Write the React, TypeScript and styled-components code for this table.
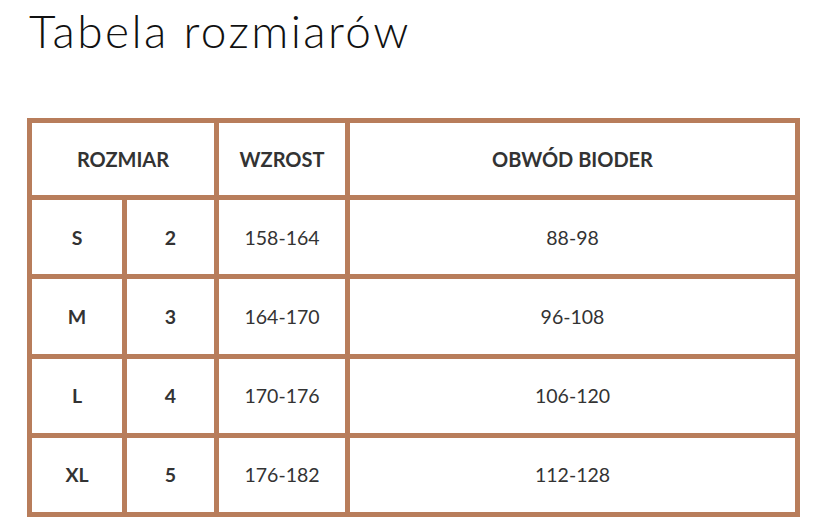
import React from "react";
import styled, { createGlobalStyle } from "styled-components";

const Global = createGlobalStyle`
  html, body { margin: 0; padding: 0; background: #ffffff; }
  body { font-family: "Lato", "Liberation Sans", sans-serif; }
`;

const Page = styled.div`
  width: 820px;
  height: 532px;
  box-sizing: border-box;
  padding: 3px 0 0 27px;
  background: #fff;
`;

const Title = styled.h1`
  margin: 0 0 0 2px;
  font-family: "Lato", sans-serif;
  font-weight: 300;
  font-size: 46px;
  line-height: 55px;
  color: #111;
  letter-spacing: 2.4px;
`;

const Table = styled.table`
  margin-top: 60px;
  width: 773px;
  table-layout: fixed;
  border-collapse: collapse;
  border: 5px solid #b87d5b;
`;

const Cell = styled.td<{ $bold?: boolean }>`
  border: 5px solid #b87d5b;
  height: 74.25px;
  padding: 0;
  text-align: center;
  vertical-align: middle;
  font-family: "Lato", sans-serif;
  font-size: 19.5px;
  font-weight: ${(p) => (p.$bold ? 700 : 400)};
  color: #333;
`;

const HeadCell = styled.th`
  border: 5px solid #b87d5b;
  height: 72px;
  padding: 0;
  text-align: center;
  vertical-align: middle;
  font-family: "Lato", sans-serif;
  font-size: 20px;
  font-weight: 700;
  color: #333;
`;

const rows = [
  ["S", "2", "158-164", "88-98"],
  ["M", "3", "164-170", "96-108"],
  ["L", "4", "170-176", "106-120"],
  ["XL", "5", "176-182", "112-128"],
];

export default function App() {
  return (
    <Page>
      <Global />
      <Title>Tabela rozmiarów</Title>
      <Table>
        <colgroup>
          <col style={{ width: 95 }} />
          <col style={{ width: 92 }} />
          <col style={{ width: 131 }} />
          <col style={{ width: 450 }} />
        </colgroup>
        <thead>
          <tr>
            <HeadCell colSpan={2}>ROZMIAR</HeadCell>
            <HeadCell>WZROST</HeadCell>
            <HeadCell>OBWÓD BIODER</HeadCell>
          </tr>
        </thead>
        <tbody>
          {rows.map((r) => (
            <tr key={r[0]}>
              <Cell $bold>{r[0]}</Cell>
              <Cell $bold>{r[1]}</Cell>
              <Cell>{r[2]}</Cell>
              <Cell>{r[3]}</Cell>
            </tr>
          ))}
        </tbody>
      </Table>
    </Page>
  );
}
